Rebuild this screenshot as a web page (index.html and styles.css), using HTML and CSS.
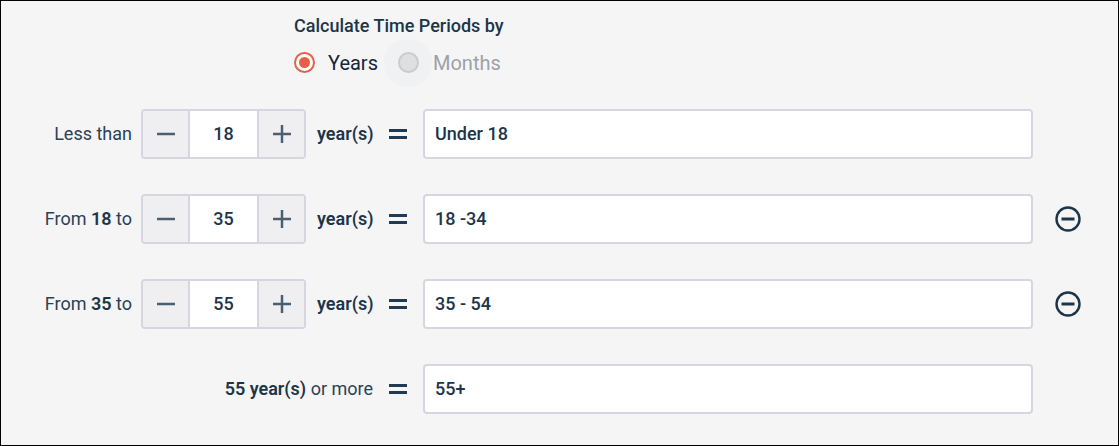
FILE: index.html
```html
<!DOCTYPE html>
<html lang="en">
<head>
<meta charset="utf-8">
<title>Calculate Time Periods</title>
<link rel="stylesheet" href="styles.css">
</head>
<body>
<main class="frame">
  <section class="period">
    <h2 class="period-title">Calculate Time Periods by</h2>
    <div class="radios">
      <label class="radio radio-on"><span class="radio-mark"></span><span class="radio-text">Years</span></label>
      <label class="radio radio-off"><span class="radio-mark"></span><span class="radio-text">Months</span></label>
    </div>
  </section>
  <section class="rows">
    <div class="row">
      <div class="row-label">Less than</div>
      <div class="stepper">
        <button class="step"><svg width="20" height="20" viewBox="0 0 20 20"><path d="M1 10h18"/></svg></button>
        <div class="step-value">18</div>
        <button class="step"><svg width="20" height="20" viewBox="0 0 20 20"><path d="M1 10h18M10 1v18"/></svg></button>
      </div>
      <div class="unit">year(s)</div>
      <div class="equals"></div>
      <div class="text-field">Under 18</div>
    </div>
    <div class="row">
      <div class="row-label">From <b>18</b> to</div>
      <div class="stepper">
        <button class="step"><svg width="20" height="20" viewBox="0 0 20 20"><path d="M1 10h18"/></svg></button>
        <div class="step-value">35</div>
        <button class="step"><svg width="20" height="20" viewBox="0 0 20 20"><path d="M1 10h18M10 1v18"/></svg></button>
      </div>
      <div class="unit">year(s)</div>
      <div class="equals"></div>
      <div class="text-field">18 -34</div>
      <svg class="remove" width="26" height="26" viewBox="0 0 26 26"><circle cx="13" cy="13" r="11.5"/><path d="M6.5 13h13"/></svg>
    </div>
    <div class="row">
      <div class="row-label">From <b>35</b> to</div>
      <div class="stepper">
        <button class="step"><svg width="20" height="20" viewBox="0 0 20 20"><path d="M1 10h18"/></svg></button>
        <div class="step-value">55</div>
        <button class="step"><svg width="20" height="20" viewBox="0 0 20 20"><path d="M1 10h18M10 1v18"/></svg></button>
      </div>
      <div class="unit">year(s)</div>
      <div class="equals"></div>
      <div class="text-field">35 - 54</div>
      <svg class="remove" width="26" height="26" viewBox="0 0 26 26"><circle cx="13" cy="13" r="11.5"/><path d="M6.5 13h13"/></svg>
    </div>
    <div class="row">
      <div class="row-label row-label-wide"><b>55 year(s)</b> or more</div>
      <div class="equals"></div>
      <div class="text-field">55+</div>
    </div>
  </section>
</main>
</body>
</html>
```
FILE: styles.css
```css
* { box-sizing: border-box; }
html, body { margin: 0; padding: 0; }
body { font-family: Roboto, "Liberation Sans", sans-serif; color: #1d3549; }
.frame {
  width: 1119px;
  height: 446px;
  border: 1px solid #000;
  background: #f5f5f5;
  padding: 15px 0 0 293px;
  overflow: hidden;
}
.period-title {
  margin: 0;
  font-size: 18px;
  line-height: 20px;
  font-weight: 500;
}
.radios { display: flex; align-items: center; margin-top: 16px; height: 21px; }
.radio { display: flex; align-items: center; gap: 13px; font-size: 20px; line-height: 21px; position: relative; }
.radio-text { padding-top: 2px; }
.radio-on { color: #16263a; margin-right: 20px; }
.radio-off { color: #9da1a8; gap: 14px; z-index: 0; }
.radio-mark {
  width: 21px;
  height: 21px;
  border-radius: 50%;
  border: 2px solid #e85f48;
  background: #fff;
  display: block;
  position: relative;
  flex: none;
}
.radio-on .radio-mark::after {
  content: "";
  position: absolute;
  inset: 3px;
  border-radius: 50%;
  background: #e85f48;
}
.radio-off .radio-mark { border-color: #cbcbcb; background: #dfdfdf; }
.radio-off .radio-mark::before {
  content: "";
  position: absolute;
  left: 50%;
  top: 50%;
  width: 48px;
  height: 48px;
  transform: translate(-50%, -50%);
  border-radius: 50%;
  background: #f0f1f3;
  z-index: -1;
}
.rows { margin: 36px 0 0 -293px; display: flex; flex-direction: column; gap: 35px; }
.row { display: flex; align-items: center; height: 50px; }
.row-label {
  width: 131px;
  text-align: right;
  font-size: 18px;
  line-height: 20px;
  color: #2a4256;
  margin-right: 9px;
  flex: none;
  white-space: nowrap;
}
.row-label b { font-weight: 600; color: #1d3549; }
.row-label-wide { width: 372px; margin-right: 16px; }
.stepper {
  display: flex;
  width: 165px;
  height: 50px;
  border: 2px solid #d6d6e2;
  border-radius: 4px;
  overflow: hidden;
  flex: none;
}
.step {
  width: 45px;
  padding: 0 0 0 1px;
  border: 0;
  background: #efeff1;
  display: flex;
  align-items: center;
  justify-content: center;
  flex: none;
}
.step svg { display: block; fill: none; stroke: #4a6072; stroke-width: 2.5; }
.step-value {
  flex: 1;
  background: #fff;
  border-left: 2px solid #d6d6e2;
  border-right: 2px solid #d6d6e2;
  text-align: center;
  font-size: 18px;
  font-weight: 500;
  line-height: 46px;
}
.unit { font-size: 18px; font-weight: 600; margin-left: 11px; width: 72px; flex: none; line-height: 20px; }
.equals {
  width: 18px;
  height: 10px;
  border-top: 3px solid #1f3a51;
  border-bottom: 3px solid #1f3a51;
  margin-right: 16px;
  flex: none;
}
.text-field {
  width: 610px;
  height: 50px;
  background: #fff;
  border: 2px solid #d6d6e2;
  border-radius: 4px;
  padding: 0 10px;
  font-size: 18px;
  font-weight: 500;
  line-height: 46px;
  flex: none;
}
.remove { margin-left: 22px; flex: none; fill: none; stroke: #1d3549; stroke-width: 2.4; }
.remove path { stroke-width: 3; }
```
